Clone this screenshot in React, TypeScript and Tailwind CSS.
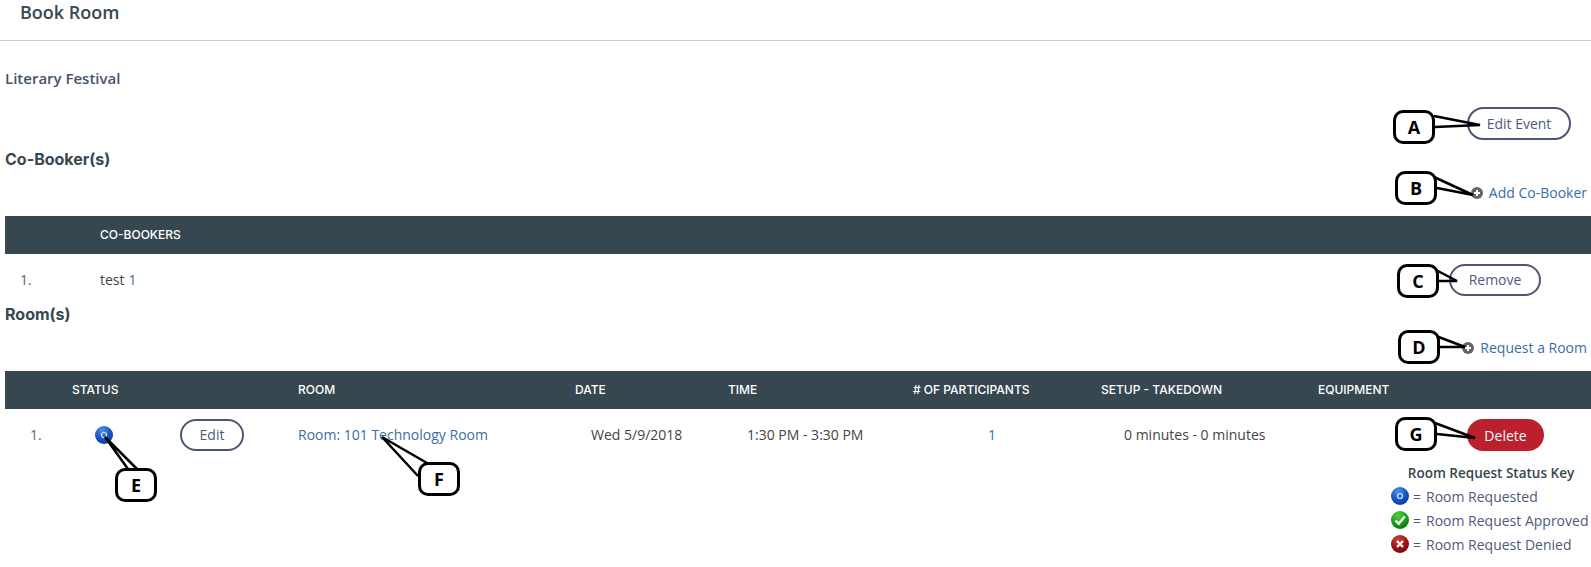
import React from 'react';

const body = "font-['Open_Sans',sans-serif]";
const heading = "font-['Inter',sans-serif]";

function PlusIcon() {
  return (
    <svg width="12" height="12" viewBox="0 0 12 12" className="shrink-0">
      <circle cx="6" cy="6" r="6" fill="#666" />
      <path d="M6 3v6M3 6h6" stroke="#fff" strokeWidth="2" />
    </svg>
  );
}

function RequestedIcon({ id }: { id: string }) {
  return (
    <svg width="18" height="18" viewBox="0 0 18 18" className="shrink-0">
      <defs>
        <radialGradient id={id} cx="40%" cy="25%" r="80%">
          <stop offset="0%" stopColor="#4f8fe8" />
          <stop offset="60%" stopColor="#1553c4" />
          <stop offset="100%" stopColor="#0b3a94" />
        </radialGradient>
      </defs>
      <circle cx="9" cy="9" r="9" fill={`url(#${id})`} />
      <circle cx="9" cy="9" r="2.5" fill="none" stroke="#dce8ff" strokeWidth="1.2" />
    </svg>
  );
}

function ApprovedIcon() {
  return (
    <svg width="18" height="18" viewBox="0 0 18 18" className="shrink-0">
      <defs>
        <radialGradient id="greenBall" cx="40%" cy="25%" r="80%">
          <stop offset="0%" stopColor="#4fd040" />
          <stop offset="60%" stopColor="#169c16" />
          <stop offset="100%" stopColor="#0a700e" />
        </radialGradient>
      </defs>
      <circle cx="9" cy="9" r="9" fill="url(#greenBall)" />
      <path d="M4.5 9.5l3.2 3.2 6-7.2" fill="none" stroke="#fff" strokeWidth="2.4" />
    </svg>
  );
}

function DeniedIcon() {
  return (
    <svg width="18" height="18" viewBox="0 0 18 18" className="shrink-0">
      <defs>
        <radialGradient id="redBall" cx="40%" cy="25%" r="80%">
          <stop offset="0%" stopColor="#d0403f" />
          <stop offset="60%" stopColor="#a01212" />
          <stop offset="100%" stopColor="#6e0909" />
        </radialGradient>
      </defs>
      <circle cx="9" cy="9" r="9" fill="url(#redBall)" />
      <path d="M6 6l6 6M12 6l-6 6" fill="none" stroke="#fff" strokeWidth="2.2" />
    </svg>
  );
}

const tails = [
  'M1434 116L1480 125L1435 127',
  'M1434 177L1473 195L1437 188',
  'M1436 270L1457 281L1439 281',
  'M1436 336L1465 347L1440 347',
  'M1435 423L1475 438L1437 434',
  'M128 469L105 437L137 469',
  'M418 476L382 437L427 463',
];

const callouts = [
  { label: 'A', left: 'left-[1393px]', top: 'top-[110px]' },
  { label: 'B', left: 'left-[1395px]', top: 'top-[171px]' },
  { label: 'C', left: 'left-[1397px]', top: 'top-[264px]' },
  { label: 'D', left: 'left-[1398px]', top: 'top-[330px]' },
  { label: 'G', left: 'left-[1395px]', top: 'top-[417px]' },
  { label: 'E', left: 'left-[115px]', top: 'top-[468px]' },
  { label: 'F', left: 'left-[418px]', top: 'top-[462px]' },
];

export default function App() {
  return (
    <div className={`relative h-[567px] overflow-hidden bg-white text-[14px] text-[#50597b] ${body}`}>
      <div className="h-[41px] border-b border-[#ccc] pl-5">
        <h1 className="text-[18px] leading-6 font-semibold text-[#37474f]">Book Room</h1>
      </div>

      <div className="pl-[5px]">
        <p className="pt-[27px] text-[15px] leading-5 font-semibold text-[#44546a]">Literary Festival</p>

        <div className="mt-[19px] flex justify-end pr-5">
          <button className="h-[33px] w-[104px] rounded-full border-2 border-[#4a5578] text-[14px]">Edit Event</button>
        </div>

        <h2 className={`mt-[7px] text-[16px] leading-6 font-bold text-[#37474f] ${heading}`}>Co-Booker(s)</h2>

        <div className="mt-3 flex h-5 items-center justify-end gap-[6px] pr-1">
          <PlusIcon />
          <a className="pb-[1px] text-[#3a6ea5]">Add Co-Booker</a>
        </div>

        <div className={`mt-[13px] grid h-[38px] grid-cols-[95px_1fr] items-center bg-[#37474f] text-[12px] font-medium text-white ${heading}`}>
          <span />
          <span>CO-BOOKERS</span>
        </div>
        <div className="flex h-[48px] items-start pt-[10px]">
          <span className="flex h-8 w-[95px] items-center pb-[2px] pl-[15px] text-[#666]">1.</span>
          <span className="flex h-8 items-center pb-[2px] text-[#444]">
            test <a className="ml-1 text-[#3a6ea5]">1</a>
          </span>
          <button className="mr-[50px] ml-auto h-8 w-[92px] rounded-full border-2 border-[#4a5578] pb-[1px] text-[14px]">Remove</button>
        </div>

        <h2 className={`text-[16px] leading-6 font-bold text-[#37474f] ${heading}`}>Room(s)</h2>

        <div className="mt-3 flex h-5 items-center justify-end gap-[6px] pr-1">
          <PlusIcon />
          <a className="pb-[1px] text-[#3a6ea5]">Request a Room</a>
        </div>

        <div className={`mt-[13px] grid h-[38px] grid-cols-[67px_226px_277px_153px_185px_188px_217px_1fr] items-center bg-[#37474f] text-[12px] font-medium text-white ${heading}`}>
          <span />
          <span>STATUS</span>
          <span>ROOM</span>
          <span>DATE</span>
          <span>TIME</span>
          <span># OF PARTICIPANTS</span>
          <span>SETUP - TAKEDOWN</span>
          <span>EQUIPMENT</span>
        </div>

        <div className="grid grid-cols-[25px_65px_85px_118px_293px_156px_241px_136px_343px_1fr] items-center pt-[10px]">
          <span />
          <span className="pb-[2px] text-[#666]">1.</span>
          <RequestedIcon id="blueBallRow" />
          <button className="h-8 w-[64px] rounded-full border-2 border-[#4a5578] pb-[1px]">Edit</button>
          <a className="pb-[2px] text-[#3a6ea5]">Room: 101 Technology Room</a>
          <span className="pb-[2px] text-[#444]">Wed 5/9/2018</span>
          <span className="pb-[2px] text-[#444]">1:30 PM - 3:30 PM</span>
          <a className="pb-[2px] text-[#3a6ea5]">1</a>
          <span className="pb-[2px] text-[#444]">0 minutes - 0 minutes</span>
          <button className="h-8 w-[77px] rounded-full bg-[#bb202c] text-white">Delete</button>
        </div>

        <div className="ml-auto mt-3 w-[200px]">
          <p className="text-center text-[13.5px] leading-5 font-semibold text-[#37474f]">Room Request Status Key</p>
          <div className="flex h-6 items-center gap-[3px] pt-[2px]">
            <RequestedIcon id="blueBallKey" />
            <span className="mr-[2px] ml-[1px]">=</span>
            <span>Room Requested</span>
          </div>
          <div className="flex h-6 items-center gap-[3px] pt-[2px]">
            <ApprovedIcon />
            <span className="mr-[2px] ml-[1px]">=</span>
            <span>Room Request Approved</span>
          </div>
          <div className="flex h-6 items-center gap-[3px] pt-[2px]">
            <DeniedIcon />
            <span className="mr-[2px] ml-[1px]">=</span>
            <span>Room Request Denied</span>
          </div>
        </div>
      </div>

      <svg width="1591" height="567" className="pointer-events-none absolute top-0 left-0">
        {tails.map(d => (
          <path key={d} d={d} fill="none" stroke="#000" strokeWidth="2.5" />
        ))}
      </svg>
      {callouts.map(c => (
        <div
          key={c.label}
          className={`absolute flex h-[34px] w-[42px] items-center justify-center rounded-[10px] border-[3px] border-black bg-white text-[18px] font-bold text-black ${c.left} ${c.top}`}
        >
          {c.label}
        </div>
      ))}
    </div>
  );
}
